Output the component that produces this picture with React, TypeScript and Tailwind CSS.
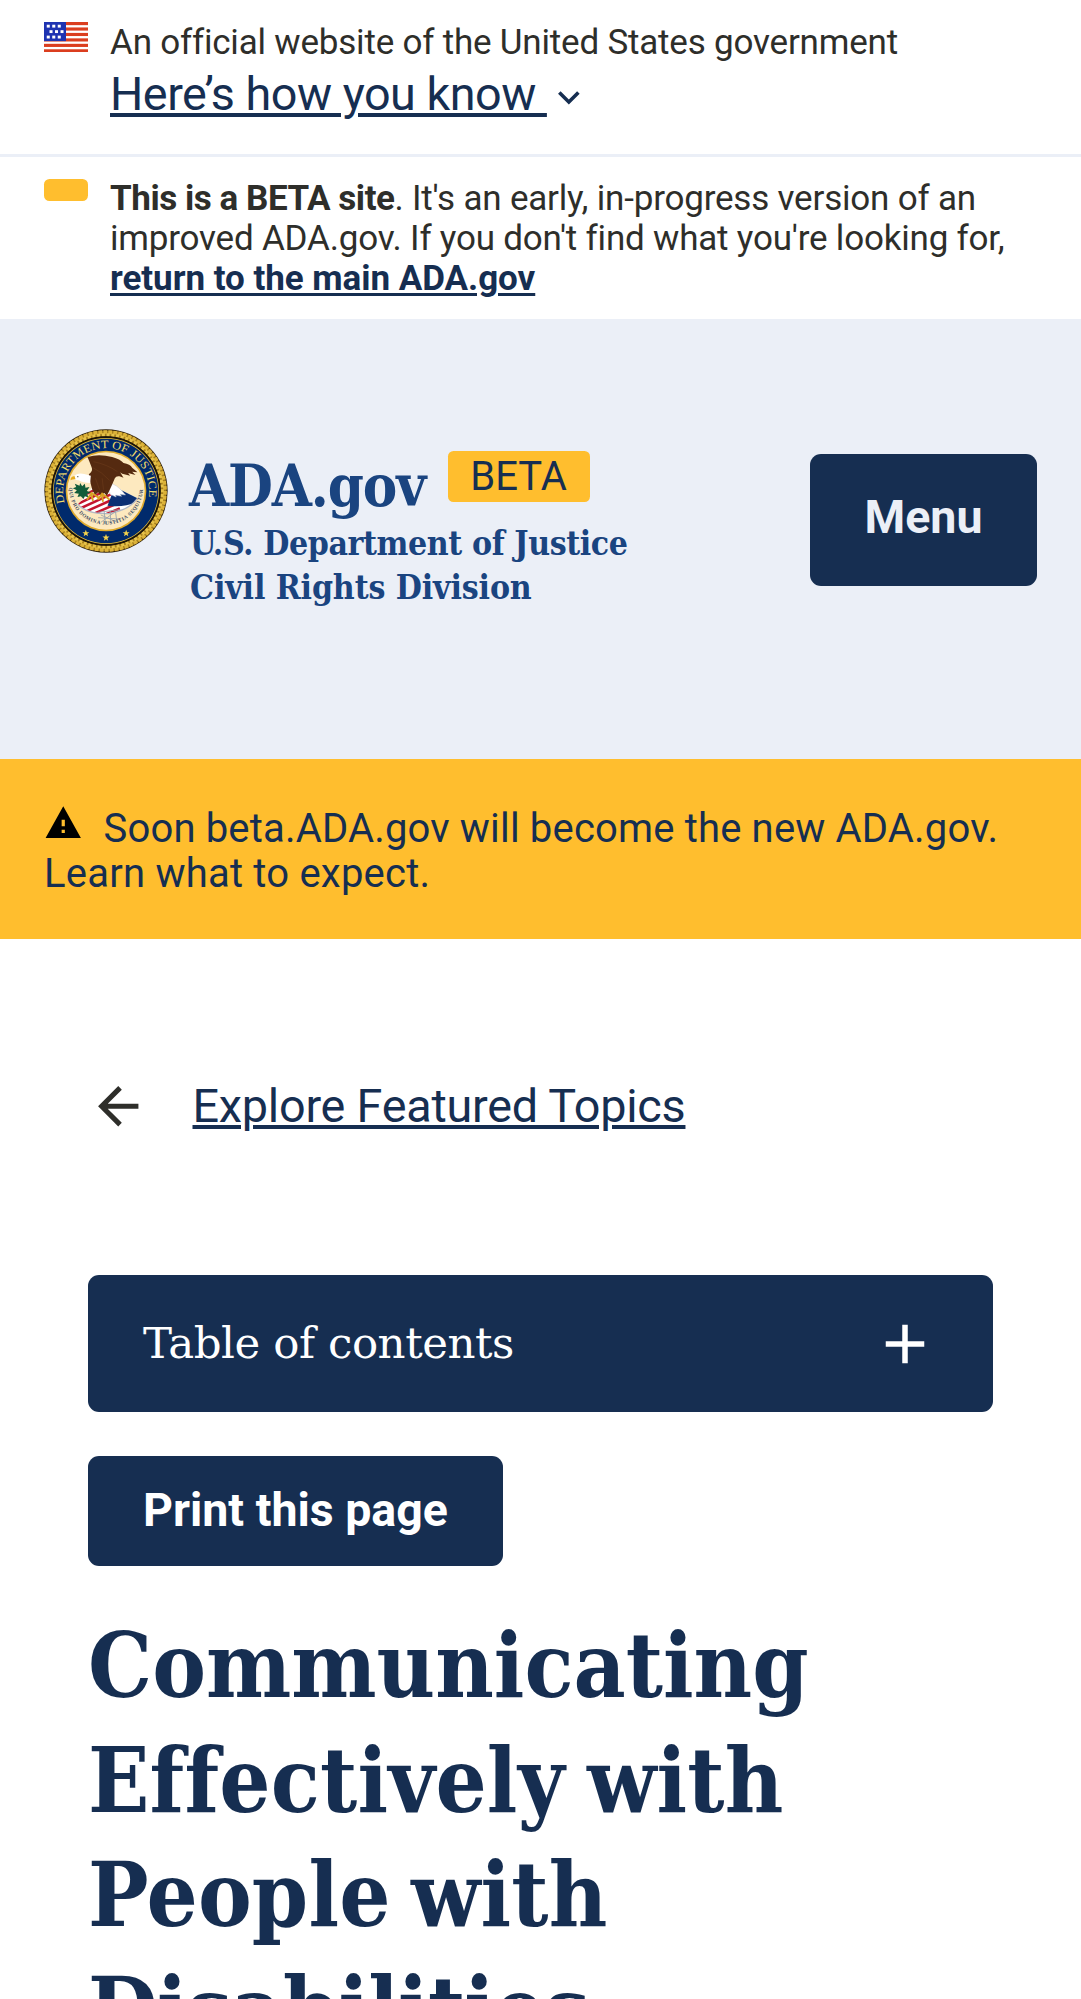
const STRIPES = [0, 2, 4, 6, 8, 10];
const STARS: [number, number][] = [
  [1, 1], [3, 1], [5, 1],
  [2, 3], [4, 3], [6, 3],
  [1, 5], [3, 5], [5, 5],
];

function Flag() {
  return (
    <svg viewBox="0 0 16 11" preserveAspectRatio="none" className="h-[30px] w-11 shrink-0">
      <rect width="16" height="11" fill="#fff" />
      {STRIPES.map((y) => (
        <rect key={y} y={y} width="16" height="1.15" fill="#db3e1f" />
      ))}
      <rect width="8" height="7" fill="#1e33b1" />
      {STARS.map(([x, y]) => (
        <rect key={`${x}-${y}`} x={x} y={y} width="1.1" height="1.05" fill="#fff" />
      ))}
    </svg>
  );
}

function Star({ x, y }: { x: number; y: number }) {
  return (
    <path
      transform={`translate(${x} ${y})`}
      d="M0-11 2.8-3.5 10.5-3.4 4.4 1.4 6.5 9 0 4.6-6.5 9-4.4 1.4-10.5-3.4-2.8-3.5Z"
      fill="#f6d44c"
    />
  );
}

function Seal() {
  return (
    <svg viewBox="41.5 42 372 372" className="size-[124px] shrink-0">
      <defs>
        <path id="seal-top" d="M103.4 264A129 129 0 1 1 351.6 264" />
        <path id="seal-bottom" d="M116.5 218A111 111 0 0 0 338.5 218" />
        <clipPath id="seal-shield">
          <path d="M143 268Q170 240 185 218L250 214 322 250Q300 285 235 296 180 300 143 268Z" />
        </clipPath>
      </defs>
      <circle cx="227.5" cy="228" r="185" fill="#33240c" />
      <circle cx="227.5" cy="228" r="173" fill="none" stroke="#a57f1f" strokeWidth="17" />
      <circle cx="227.5" cy="228" r="177" fill="none" stroke="#dcb238" strokeWidth="11" strokeDasharray="11 4" />
      <circle cx="227.5" cy="228" r="169" fill="none" stroke="#e6c24a" strokeWidth="9" strokeDasharray="9 5.32" strokeDashoffset="5" />
      <circle cx="227.5" cy="228" r="164" fill="#1b1408" />
      <circle cx="227.5" cy="228" r="159" fill="#e9c13f" />
      <circle cx="227.5" cy="228" r="157" fill="#002a6c" />
      <circle cx="227.5" cy="228" r="121" fill="#dfab2e" />
      <circle cx="227.5" cy="228" r="116" fill="#fde9bf" />
      <text fill="#f3dc6a" fontSize="34" className="font-['Liberation_Serif']">
        <textPath href="#seal-top" textLength="458" lengthAdjust="spacingAndGlyphs">
          DEPARTMENT OF JUSTICE
        </textPath>
      </text>
      <g clipPath="url(#seal-shield)">
        <rect x="130" y="205" width="200" height="100" fill="#fff" />
        {[0, 1, 2, 3, 4, 5, 6].map((i) => (
          <path key={i} d={`M${128 + i * 4} ${240 + i * 15}L${215 + i * 9} ${196 + i * 14}`} stroke="#c4152e" strokeWidth="7.5" />
        ))}
        <path d="M232 272 258 205 330 245 318 262Q280 278 232 272Z" fill="#0b2f73" />
      </g>
      <path d="M143 268Q170 298 235 296 296 286 322 250" fill="none" stroke="#b4b9c4" strokeWidth="4" />
      <path d="M203 292l66-8M212 300l50 22M212 322l46-34M222 290l4 38M240 288l2 38M256 290l4 30M204 308l62 4" stroke="#9aa3ad" strokeWidth="2.6" fill="none" />
      <path
        d="M134 206l14 6 2-8 6 10 8-8 2 12 12-2-8 12 12 4-12 6 8 10-14-4-4 8-8-8-10 2 4-10-14-2 8-8-12-6 10-4Z"
        fill="#125c3a"
      />
      <path d="M232 202Q260 206 286 240L270 238 274 244 256 240 258 246 240 238Z" fill="#fff" stroke="#c5c9d2" strokeWidth="1.5" />
      <path
        d="M172 126Q205 116 246 126 270 132 280 144 300 148 306 158L322 172 306 170 316 180 294 174 300 182 276 176 270 172 280 188 268 184Q258 182 254 190 246 210 236 230L230 242 222 234 212 242 204 232 194 240Q184 222 180 200L176 178Q190 168 184 156 178 140 172 126Z"
        fill="#552a10"
      />
      <path d="M190 140Q230 148 262 170M188 158Q214 170 238 196M196 190l12 34M216 190l4 34" stroke="#6a3a1a" strokeWidth="2" fill="none" />
      <path d="M130 185Q142 172 162 177L182 182 180 204Q158 204 146 196 136 196 130 192Z" fill="#fff" />
      <path d="M133 183Q121 184 121 196 127 192 136 193Z" fill="#e8ac1e" />
      <circle cx="143" cy="185" r="1.8" fill="#333" />
      <path d="M172 252l12-18 10 6 14 10M184 240l4 16M204 252l12-16 8 6 12 10M216 240l2 18" stroke="#d8a322" strokeWidth="6" fill="none" strokeLinecap="round" />
      <text fill="#3a4a63" fontSize="15.5" fontWeight="700" className="font-['Liberation_Serif']">
        <textPath href="#seal-bottom" textLength="343" lengthAdjust="spacing">
          QUI PRO DOMINA JUSTITIA SEQUITUR
        </textPath>
      </text>
      <Star x={167} y={355} />
      <Star x={227.5} y={368} />
      <Star x={288} y={355} />
    </svg>
  );
}

function GovBanner() {
  return (
    <section className="flex h-[157px] gap-[22px] border-b-[3px] border-[#ebeff7] px-11 pt-[22px]">
      <Flag />
      <div className="pt-0.5">
        <p className="text-[35px] leading-[38px] tracking-[-0.2px]">
          An official website of the United States government
        </p>
        <button className="mt-1.5 flex items-center text-[46.75px] leading-[52px] tracking-[-0.5px] text-[#162e51]">
          <span className="whitespace-pre underline decoration-[4px] underline-offset-[3px]">{"Here’s how you know "}</span>
          <svg viewBox="6 8.5 12 7.5" className="mt-2 ml-[11px] h-[13.5px] w-[21.7px]" fill="currentColor">
            <path d="M16.59 8.59 12 13.17 7.41 8.59 6 10l6 6 6-6z" />
          </svg>
        </button>
      </div>
    </section>
  );
}

function BetaBanner() {
  return (
    <section className="flex h-[162px] gap-[22px] px-11 pt-[22px]">
      <span className="-mt-[0.5px] h-[22.5px] w-11 shrink-0 rounded-[5.5px] bg-[#ffbe2e]" />
      <p className="whitespace-nowrap text-[35px] leading-10 tracking-[-0.2px]">
        <b className="tracking-[-0.45px]">This is a BETA site</b>. It's an early, in-progress version of an
        <br />
        improved ADA.gov. If you don't find what you're looking for,
        <br />
        <a className="font-bold tracking-[-0.04px] text-[#162e51] underline decoration-[3px] underline-offset-[3px]">
          return to the main ADA.gov
        </a>
      </p>
    </section>
  );
}

function Header() {
  return (
    <header className="flex h-[440px] items-start bg-[#ebeff7] px-11 pt-[110px]">
      <Seal />
      <div className="ml-[21px] pt-[27px] font-['DejaVu_Serif_Condensed','DejaVu_Serif',serif] font-bold text-[#1a4480]">
        <div className="flex items-start">
          <span className="w-[259px] text-[57.5px] leading-[60px] tracking-[-1.1px]">ADA.gov</span>
          <span className="-mt-[5px] flex h-[51px] w-[142px] items-center justify-center rounded-[5.5px] bg-[#ffbe2e] pt-px pr-px font-['Roboto',sans-serif] text-[40px] font-normal text-[#162e51]">
            BETA
          </span>
        </div>
        <p className="mt-1.5 ml-px whitespace-nowrap text-[33.5px] leading-[44px] tracking-[-0.4px]">U.S. Department of Justice</p>
        <p className="ml-px whitespace-nowrap text-[33.5px] leading-[44px] tracking-[-0.12px]">Civil Rights Division</p>
      </div>
      <button className="mt-[24.5px] ml-auto flex h-[132px] w-[227px] items-center justify-center rounded-[11px] bg-[#162e51] pb-[3px] text-[46.5px] font-bold text-[#ebeff7]">
        Menu
      </button>
    </header>
  );
}

function Alert() {
  return (
    <section className="h-[180px] bg-[#ffbe2e] px-11 pt-[47px]">
      <p className="whitespace-nowrap text-[40px] leading-[45px] tracking-[0.17px] text-[#162e51]">
        <svg
          viewBox="0 0 24 24"
          preserveAspectRatio="none"
          className="-mt-2.5 mr-[21px] inline-block h-10 w-[38.5px] align-[-1px] text-black"
          fill="currentColor"
        >
          <path d="M1 21h22L12 2 1 21zm12-3h-2v-2h2v2zm0-4h-2v-4h2v4z" />
        </svg>
        Soon beta.ADA.gov will become the new ADA.gov.
        <br />
        <span className="tracking-[0.22px]">Learn what to expect.</span>
      </p>
    </section>
  );
}

export default function App() {
  return (
    <div className="h-[1999px] w-[1081px] overflow-hidden bg-white font-['Roboto',sans-serif] text-[#2e2e2a]">
      <GovBanner />
      <BetaBanner />
      <Header />
      <Alert />
      <main className="px-[88px] pt-[137px]">
        <nav className="flex h-[61px] items-center gap-11">
          <svg viewBox="0 0 24 24" className="size-[60.5px]" fill="currentColor">
            <path d="M20 11H7.83l5.59-5.59L12 4l-8 8 8 8 1.41-1.41L7.83 13H20v-2z" />
          </svg>
          <a className="text-[46.75px] leading-[60.5px] tracking-[-0.23px] text-[#162e51] underline decoration-[4px] underline-offset-[3px]">
            Explore Featured Topics
          </a>
        </nav>
        <button className="mt-[138px] flex h-[137px] w-[905px] items-center justify-between rounded-[11px] bg-[#162e51] px-[55px] font-['DejaVu_Serif',serif] text-[43.5px] tracking-[-0.45px] text-white">
          Table of contents
          <svg viewBox="0 0 24 24" className="size-[66px]" fill="currentColor">
            <path d="M19 13h-6v6h-2v-6H5v-2h6V5h2v6h6v2z" />
          </svg>
        </button>
        <button className="mt-11 flex h-[110px] w-[415px] items-center rounded-[11px] bg-[#162e51] pb-px pl-[55px] text-[46.5px] font-bold text-white">
          Print this page
        </button>
        <h1 className="mt-[43px] whitespace-nowrap font-['DejaVu_Serif_Condensed','DejaVu_Serif',serif] text-[89.6px] leading-[114.5px] font-bold text-[#162e51] [font-variant-ligatures:none]">
          Communicating
          <br />
          <span className="tracking-[0.2px] [word-spacing:-6px]">Effectively with</span>
          <br />
          <span className="tracking-[0.2px] [word-spacing:-8px]">People with</span>
          <br />
          <span className="tracking-[-0.8px]">Disabilities</span>
        </h1>
      </main>
    </div>
  );
}
